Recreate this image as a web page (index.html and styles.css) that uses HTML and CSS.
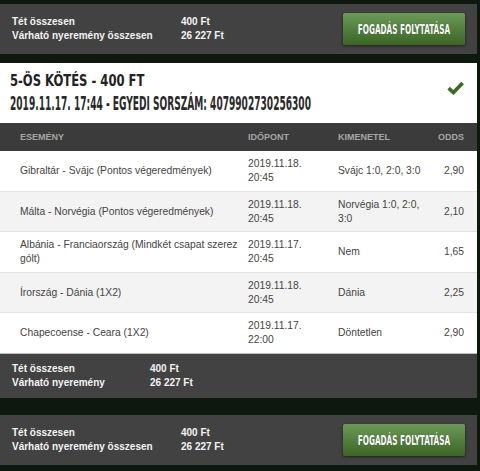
FILE: index.html
```html
<!DOCTYPE html>
<html lang="hu">
<head>
<meta charset="utf-8">
<title>Szelvény</title>
<link rel="stylesheet" href="styles.css">
</head>
<body>
<div class="page">
  <section class="summary summary-top">
    <dl class="totals">
      <dt>Tét összesen</dt><dd>400 Ft</dd>
      <dt>Várható nyeremény összesen</dt><dd>26 227 Ft</dd>
    </dl>
    <button class="btn" type="button"><span class="btn-label">FOGADÁS FOLYTATÁSA</span></button>
  </section>

  <section class="ticket">
    <header class="ticket-head">
      <div class="ticket-titles">
        <h2 class="title"><span class="cond">5-ÖS KÖTÉS - 400 FT</span></h2>
        <div class="subtitle"><span class="cond">2019.11.17. 17:44 - EGYEDI SORSZÁM: 4079902730256300</span></div>
      </div>
      <svg class="check" width="17" height="14" viewBox="0 0 17 14" aria-hidden="true">
        <path d="M1.6 7.2 L6.4 11.6 L15.6 2" fill="none" stroke="#3d6b22" stroke-width="3.6"/>
      </svg>
    </header>

    <table class="events">
      <colgroup>
        <col class="c-event"><col class="c-date"><col class="c-out"><col class="c-odds">
      </colgroup>
      <thead>
        <tr><th>ESEMÉNY</th><th>IDŐPONT</th><th>KIMENETEL</th><th class="num">ODDS</th></tr>
      </thead>
      <tbody>
        <tr><td>Gibraltár - Svájc (Pontos végeredmények)</td><td>2019.11.18.<br>20:45</td><td>Svájc 1:0, 2:0, 3:0</td><td class="num">2,90</td></tr>
        <tr><td>Málta - Norvégia (Pontos végeredmények)</td><td>2019.11.18.<br>20:45</td><td>Norvégia 1:0, 2:0,<br>3:0</td><td class="num">2,10</td></tr>
        <tr><td>Albánia - Franciaország (Mindkét csapat szerez<br>gólt)</td><td>2019.11.17.<br>20:45</td><td>Nem</td><td class="num">1,65</td></tr>
        <tr><td>Írország - Dánia (1X2)</td><td>2019.11.18.<br>20:45</td><td>Dánia</td><td class="num">2,25</td></tr>
        <tr><td>Chapecoense - Ceara (1X2)</td><td>2019.11.17.<br>22:00</td><td>Döntetlen</td><td class="num">2,90</td></tr>
      </tbody>
    </table>

    <div class="summary summary-ticket">
      <dl class="totals totals-narrow">
        <dt>Tét összesen</dt><dd>400 Ft</dd>
        <dt>Várható nyeremény</dt><dd>26 227 Ft</dd>
      </dl>
    </div>
  </section>

  <section class="summary summary-bottom">
    <dl class="totals">
      <dt>Tét összesen</dt><dd>400 Ft</dd>
      <dt>Várható nyeremény összesen</dt><dd>26 227 Ft</dd>
    </dl>
    <button class="btn" type="button"><span class="btn-label">FOGADÁS FOLYTATÁSA</span></button>
  </section>
</div>
</body>
</html>
```

FILE: styles.css
```css
* { box-sizing: border-box; }

html, body { margin: 0; padding: 0; }

body {
  background: #0f180f;
  font-family: "Liberation Sans", Arial, sans-serif;
}

.page {
  width: 477px;
  padding-top: 4px;
  display: flex;
  flex-direction: column;
}

/* summary panels */
.summary {
  background: #424242;
  color: #f4f4f4;
  display: flex;
  align-items: center;
  justify-content: space-between;
  padding: 0 12px;
}

.summary-top { height: 50px; }
.summary-bottom { height: 50px; margin-top: 17px; }
.summary-ticket { height: 45px; border-top: 1px solid #bcbcbc; }

.totals {
  margin: 0;
  display: grid;
  grid-template-columns: 169px auto;
  font-size: 10px;
  font-weight: bold;
  line-height: 14px;
}
.totals dt, .totals dd { margin: 0; white-space: nowrap; }
.totals-narrow { grid-template-columns: 138px auto; }

/* button */
.btn {
  width: 122px;
  height: 32px;
  border: 0;
  border-radius: 2px;
  padding: 0;
  background: linear-gradient(#6b9a58, #3b6524);
  box-shadow: 0 1px 3px rgba(0, 0, 0, 0.55);
  display: flex;
  align-items: center;
  justify-content: center;
  overflow: visible;
  cursor: pointer;
}
.btn-label {
  flex-shrink: 0;
  white-space: nowrap;
  color: #fff;
  font-family: "DejaVu Sans Condensed", "DejaVu Sans", sans-serif;
  font-stretch: condensed;
  font-weight: bold;
  font-size: 13.5px;
  transform: scaleX(0.6);
  text-shadow: 0 0 1px rgba(0, 0, 0, 0.5);
}

/* ticket */
.ticket {
  margin-top: 9px;
  background: #fff;
}

.ticket-head {
  height: 60px;
  padding: 8px 13px 0 10px;
  display: flex;
  justify-content: space-between;
  align-items: flex-start;
}

.ticket-titles { flex: 1; min-width: 0; }

.cond {
  display: block;
  white-space: nowrap;
  transform-origin: 0 0;
  font-family: "DejaVu Sans Condensed", "DejaVu Sans", sans-serif;
  font-stretch: condensed;
  font-weight: bold;
  color: #222;
}

.title {
  margin: 0;
  font-size: 16.5px;
  line-height: 20px;
}
.title .cond { transform: scaleX(0.78); }

.subtitle {
  margin-top: 1px;
  font-size: 19px;
  line-height: 22px;
}
.subtitle .cond { transform: scaleX(0.53); color: #2a2a2a; }

.check { margin-top: 10px; flex-shrink: 0; }

/* table */
.events {
  width: 477px;
  border-collapse: collapse;
  table-layout: fixed;
}
.c-event { width: 238px; }
.c-date { width: 90px; }
.c-out { width: 90px; }
.c-odds { width: 59px; }

.events th {
  background: #3b3b3b;
  color: #a6a6a6;
  font-size: 9px;
  font-weight: bold;
  text-align: left;
  height: 28px;
  padding: 0 10px;
  white-space: nowrap;
}
.events td {
  color: #444;
  font-size: 10.3px;
  line-height: 14px;
  padding: 6px 10px 5.5px;
  border-top: 1px solid #e2e2e2;
  vertical-align: middle;
  white-space: nowrap;
}
.events th:first-child,
.events td:first-child { padding-left: 20px; padding-right: 4px; }
.events td:nth-child(3) { padding-right: 0; }
.events tbody tr:nth-child(even) td { background: #f3f3f3; }
.events tbody tr:first-child td { border-top: 0; }
.events .num { text-align: right; padding-right: 13px; }
```
